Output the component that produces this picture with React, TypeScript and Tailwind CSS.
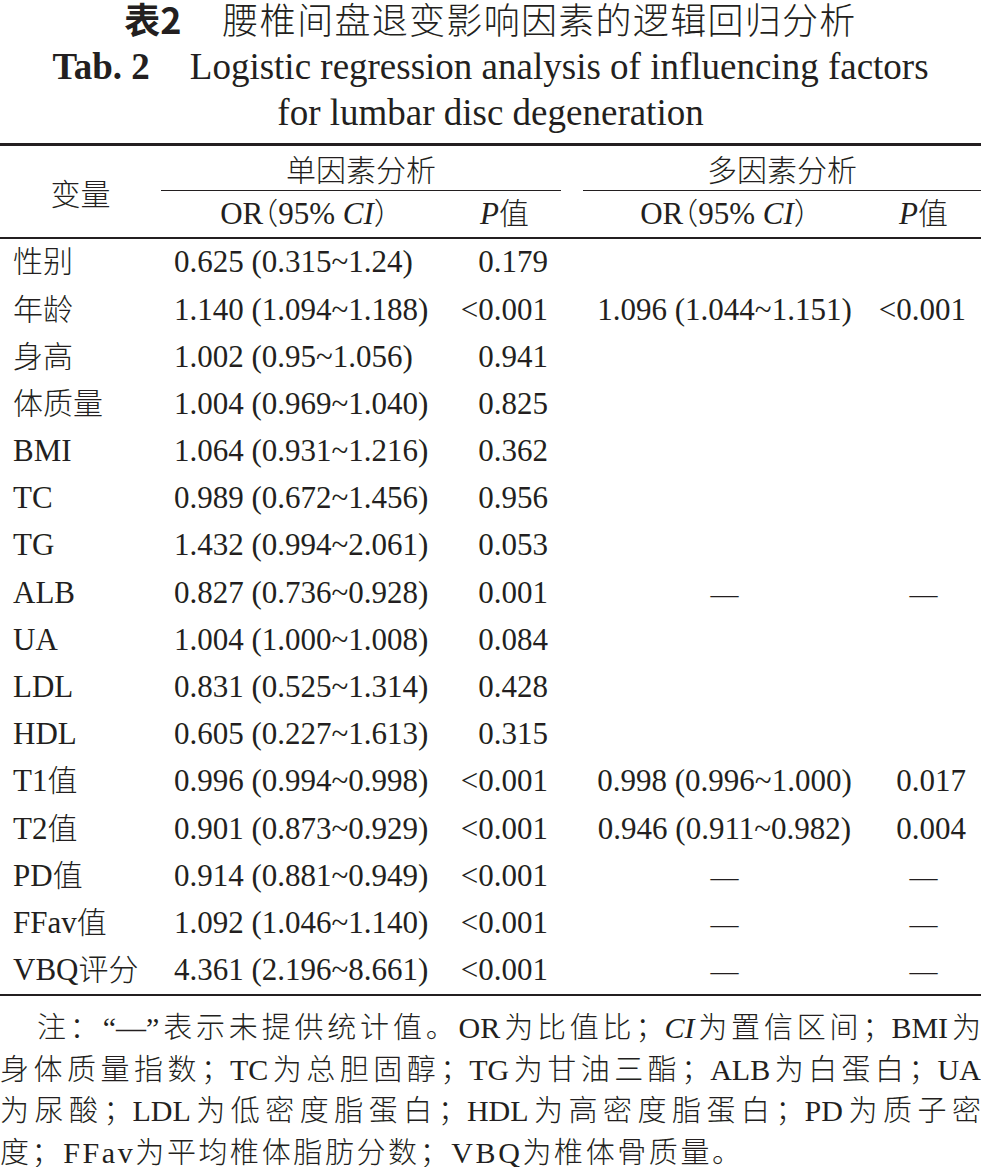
import React from "react";

const CJK = /([\u3000-\u303f\u4e00-\u9fff\uff00-\uffef]+)/;

const tableCjk = "text-[30px] leading-none font-['Noto_Sans_CJK_SC',sans-serif] font-light";
const noteCjk = "text-[29px] leading-none font-['Noto_Sans_CJK_SC',sans-serif] font-light";

function Mixed({ text, cls = tableCjk }: { text: string; cls?: string }) {
  return (
    <>
      {text.split(CJK).map((p, i) =>
        p && CJK.test(p) ? (
          <span key={i} className={cls}>
            {p}
          </span>
        ) : (
          <span key={i}>{p}</span>
        )
      )}
    </>
  );
}

const rows: [string, string, string, string, string][] = [
  ["性别", "0.625 (0.315~1.24)", "0.179", "", ""],
  ["年龄", "1.140 (1.094~1.188)", "<0.001", "1.096 (1.044~1.151)", "<0.001"],
  ["身高", "1.002 (0.95~1.056)", "0.941", "", ""],
  ["体质量", "1.004 (0.969~1.040)", "0.825", "", ""],
  ["BMI", "1.064 (0.931~1.216)", "0.362", "", ""],
  ["TC", "0.989 (0.672~1.456)", "0.956", "", ""],
  ["TG", "1.432 (0.994~2.061)", "0.053", "", ""],
  ["ALB", "0.827 (0.736~0.928)", "0.001", "—", "—"],
  ["UA", "1.004 (1.000~1.008)", "0.084", "", ""],
  ["LDL", "0.831 (0.525~1.314)", "0.428", "", ""],
  ["HDL", "0.605 (0.227~1.613)", "0.315", "", ""],
  ["T1值", "0.996 (0.994~0.998)", "<0.001", "0.998 (0.996~1.000)", "0.017"],
  ["T2值", "0.901 (0.873~0.929)", "<0.001", "0.946 (0.911~0.982)", "0.004"],
  ["PD值", "0.914 (0.881~0.949)", "<0.001", "—", "—"],
  ["FFav值", "1.092 (1.046~1.140)", "<0.001", "—", "—"],
  ["VBQ评分", "4.361 (2.196~8.661)", "<0.001", "—", "—"],
];

const cols = "grid grid-cols-[161px_287px_113px_22px_283px_115px]";
const cjk = "font-['Noto_Sans_CJK_SC',sans-serif] font-light leading-none";

function ORHeader() {
  return (
    <span className="whitespace-nowrap">
      OR
      <span className={`${cjk} text-[30px] [font-feature-settings:'halt']`}>（</span>
      95% <i>CI</i>
      <span className={`${cjk} text-[30px] [font-feature-settings:'halt']`}>）</span>
    </span>
  );
}

function PHeader() {
  return (
    <span className="whitespace-nowrap">
      <i>P</i>
      <span className={`${cjk} text-[30px]`}>值</span>
    </span>
  );
}

function Dash() {
  return <span className="text-[28px] leading-none">—</span>;
}

export default function App() {
  return (
    <div className="w-[981px] h-[1167px] overflow-hidden bg-white text-[#231f20] font-['Liberation_Serif','Noto_Sans_CJK_SC',serif]">
      {/* Title */}
      <div className="text-center">
        <div className="h-[45px] leading-[36px] text-[36px] whitespace-nowrap font-['Noto_Sans_CJK_SC',sans-serif]">
          <span className="font-bold">表2</span>
          <span className="font-light ml-[41px] tracking-[1.3px]">腰椎间盘退变影响因素的逻辑回归分析</span>
        </div>
        <div className="leading-[44px] text-[37px] whitespace-nowrap">
          <span className="font-bold">Tab. 2</span>
          <span className="ml-[40px]">Logistic regression analysis of influencing factors</span>
        </div>
        <div className="leading-[47px] text-[37px] whitespace-nowrap">for lumbar disc degeneration</div>
      </div>

      {/* Table */}
      <div className="mt-[7px] border-t-[3px] border-[#231f20] text-[31px]">
        <div className={`${cols} grid-rows-[45px_46px] border-b-2 border-[#231f20]`}>
          <div className="col-start-1 row-start-1 row-span-2 flex items-center justify-center">
            <span className={`${cjk} text-[30px]`}>变量</span>
          </div>
          <div className="col-start-2 col-span-2 row-start-1 flex items-center justify-center border-b border-[#231f20]">
            <span className={`${cjk} text-[30px]`}>单因素分析</span>
          </div>
          <div className="col-start-5 col-span-2 row-start-1 flex items-center justify-center border-b border-[#231f20]">
            <span className={`${cjk} text-[30px]`}>多因素分析</span>
          </div>
          <div className="col-start-2 row-start-2 flex items-center justify-center">
            <ORHeader />
          </div>
          <div className="col-start-3 row-start-2 flex items-center justify-center">
            <PHeader />
          </div>
          <div className="col-start-5 row-start-2 flex items-center justify-center">
            <ORHeader />
          </div>
          <div className="col-start-6 row-start-2 flex items-center justify-center">
            <PHeader />
          </div>
        </div>

        <div className="flex flex-col border-b-2 border-[#231f20]">
          {rows.map((r, i) => (
            <div key={i} className={`${cols} h-[47.2px] items-center whitespace-nowrap`}>
              <div className="pl-[13px]">
                <Mixed text={r[0]} />
              </div>
              <div className="pl-[13px]">{r[1]}</div>
              <div className="text-right pr-[13px]">{r[2]}</div>
              <div />
              <div className="text-center">{r[3] === "—" ? <Dash /> : r[3]}</div>
              <div className={r[4] === "—" ? "text-center" : "text-right pr-[15px]"}>
                {r[4] === "—" ? <Dash /> : r[4]}
              </div>
            </div>
          ))}
        </div>
      </div>

      {/* Notes */}
      <div className="pt-[11px] text-[30px] leading-[41.5px]">
        <div className="pl-[37px] text-justify [text-align-last:justify]">
          <Mixed cls={noteCjk} text="注：" />“—”<Mixed cls={noteCjk} text="表示未提供统计值。" />OR
          <Mixed cls={noteCjk} text="为比值比；" />
          <i>CI</i>
          <Mixed cls={noteCjk} text="为置信区间；" />BMI<Mixed cls={noteCjk} text="为" />
        </div>
        <div className="text-justify [text-align-last:justify]">
          <Mixed cls={noteCjk} text="身体质量指数；TC为总胆固醇；TG为甘油三酯；ALB为白蛋白；UA" />
        </div>
        <div className="text-justify [text-align-last:justify]">
          <Mixed cls={noteCjk} text="为尿酸；LDL为低密度脂蛋白；HDL为高密度脂蛋白；PD为质子密" />
        </div>
        <div className="whitespace-nowrap tracking-[2.6px]">
          <Mixed cls={noteCjk} text="度；FFav为平均椎体脂肪分数；VBQ为椎体骨质量。" />
        </div>
      </div>
    </div>
  );
}
